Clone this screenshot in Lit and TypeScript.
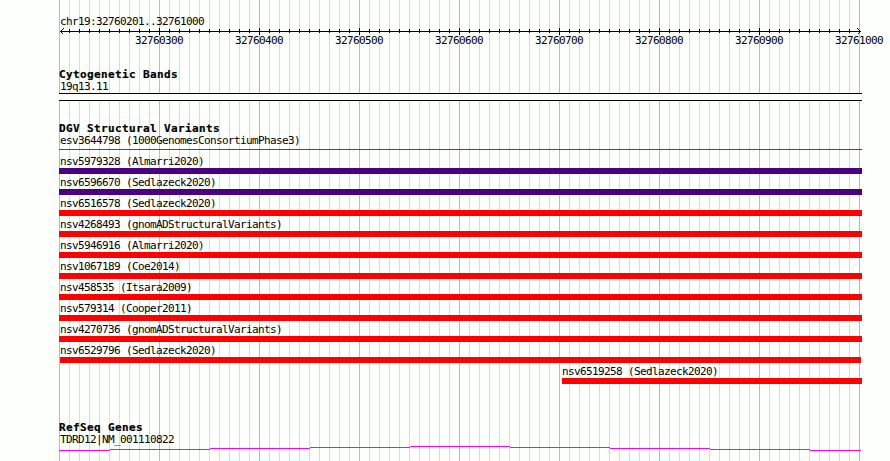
import { LitElement, html, css, svg } from "lit";
import { customElement } from "lit/decorators.js";

type Variant = { id: string; study: string; color: string; start?: number; end?: number; thin?: boolean };

const RED = "#ff0000";
const INDIGO = "#4b0082";

const variants: Variant[] = [
  { id: "esv3644798", study: "1000GenomesConsortiumPhase3", color: RED, thin: true },
  { id: "nsv5979328", study: "Almarri2020", color: INDIGO },
  { id: "nsv6596670", study: "Sedlazeck2020", color: INDIGO },
  { id: "nsv6516578", study: "Sedlazeck2020", color: RED },
  { id: "nsv4268493", study: "gnomADStructuralVariants", color: RED },
  { id: "nsv5946916", study: "Almarri2020", color: RED },
  { id: "nsv1067189", study: "Coe2014", color: RED },
  { id: "nsv458535", study: "Itsara2009", color: RED },
  { id: "nsv579314", study: "Cooper2011", color: RED },
  { id: "nsv4270736", study: "gnomADStructuralVariants", color: RED },
  { id: "nsv6529796", study: "Sedlazeck2020", color: RED, start: 1, end: 802 },
  { id: "nsv6519258", study: "Sedlazeck2020", color: RED, start: 503 },
];

const TRACK_WIDTH = 803;
const ticks = Array.from({ length: 80 }, (_, i) => i * 10);
const positions = [300, 400, 500, 600, 700, 800, 900, 1000].map((n) => 32760000 + n);
const geneSteps = [
  [0, 51, 4], [51, 151, 3], [151, 251, 2], [251, 351, 1], [351, 451, 0],
  [451, 551, 1], [551, 651, 2], [651, 751, 3], [751, 802, 4],
];

@customElement("app-root")
export class AppRoot extends LitElement {
  static styles = css`
    :host {
      display: block;
      width: 890px;
      height: 461px;
      overflow: hidden;
      background: #fdfffc;
      color: #000;
      font: 11px/14px "DejaVu Sans Mono", monospace;
      letter-spacing: -0.622px;
      white-space: pre;
    }
    .tracks {
      box-sizing: border-box;
      margin-left: 59px;
      width: 831px;
      height: 461px;
      padding-top: 15px;
      display: flex;
      flex-direction: column;
      background:
        repeating-linear-gradient(90deg, #87ceeb 0 1px, transparent 1px 100px) 0 0 / 801px 100% no-repeat,
        repeating-linear-gradient(90deg, #afeeee 0 1px, transparent 1px 10px) 0 0 / 801px 100% no-repeat;
    }
    .label { height: 12px; padding-left: 1px; }
    .axis { display: block; height: 7px; margin-top: 1px; }
    .numbers { display: flex; margin: -1px 0 0 50px; height: 12px; }
    .numbers span { width: 100px; text-align: center; flex: none; }
    .title {
      height: 11px;
      font-size: 11px;
      line-height: 12px;
      font-weight: 700;
      letter-spacing: 0.378px;
      -webkit-text-stroke: 0.2px #000;
    }
    .cyto { margin-top: 23px; }
    .band {
      box-sizing: border-box;
      width: 803px;
      height: 8px;
      margin-top: 1px;
      border: solid #000;
      border-width: 1px 0;
      background: #fdfffc;
    }
    .dgv { margin-top: 22px; }
    .variant { height: 21px; }
    .bar { height: 6px; margin-top: 1px; }
    .thin .bar { height: 1px; margin-top: 3px; }
    .genes { margin-top: 36px; }
    .steps { display: block; margin-top: 1px; }
  `;

  private variant(v: Variant) {
    const start = v.start ?? 0;
    const end = v.end ?? TRACK_WIDTH;
    const shift = start > 1 ? start - 1 : 0;
    return html`<div class="variant ${v.thin ? "thin" : ""}"><div class="label" style="margin-left:${shift}px">${v.id} (${v.study})</div><div class="bar" style="margin-left:${start}px;width:${end - start}px;background:${v.color}"></div></div>`;
  }

  render() {
    return html`<div class="tracks">
      <div class="label">chr19:32760201..32761000</div>
      <svg class="axis" width="803" height="7" shape-rendering="crispEdges">
        <rect x="1" y="3" width="801" height="1" />
        ${ticks.slice(1).map((x) => x % 100 === 0
          ? svg`<rect x=${x} y="0" width="1" height="7" />`
          : svg`<rect x=${x} y="1" width="1" height="4" />`)}
        <path d="M4.5 0.5 L1.5 3.5 L4.5 6.5 M798.5 0.5 L801.5 3.5 L798.5 6.5" fill="none" stroke="#000" />
      </svg>
      <div class="numbers">${positions.map((p) => html`<span>${p}</span>`)}</div>
      <div class="title cyto">Cytogenetic Bands</div>
      <div class="label">19q13.11</div>
      <div class="band"></div>
      <div class="title dgv">DGV Structural Variants</div>
      <div>${variants.map((v) => this.variant(v))}</div>
      <div class="title genes">RefSeq Genes</div>
      <div class="label">TDRD12|NM_001110822</div>
      <svg class="steps" width="803" height="5" shape-rendering="crispEdges">
        ${geneSteps.map(([a, b, y]) => svg`<rect x=${a} y=${y} width=${b - a} height="1" fill="#ff00ff" />`)}
      </svg>
    </div>`;
  }
}
